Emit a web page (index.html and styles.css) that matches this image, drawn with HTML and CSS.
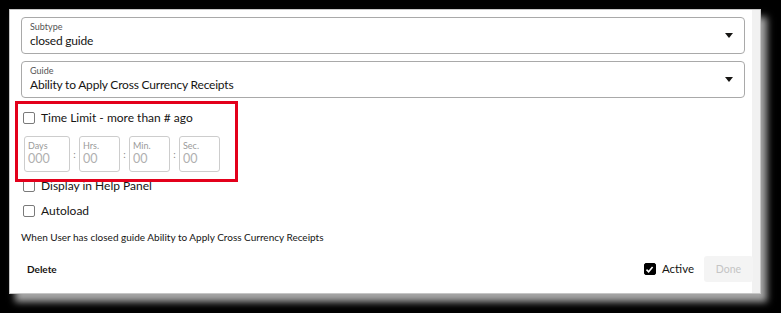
FILE: index.html
```html
<!DOCTYPE HTML>
<html>
<head>
    <meta charset="UTF-8">
    <title>Guide Rule</title>
    <link rel="stylesheet" href="styles.css">
</head>
<body>
    <div class="dialog">
        <div class="select">
            <div class="select-label">Subtype</div>
            <div class="select-value">closed guide</div>
            <span class="caret"></span>
        </div>

        <div class="select second">
            <div class="select-label">Guide</div>
            <div class="select-value">Ability to Apply Cross Currency Receipts</div>
            <span class="caret"></span>
        </div>

        <label class="check-row time-row">
            <span class="box"></span>
            <span>Time Limit - more than # ago</span>
        </label>

        <div class="time-inputs">
            <div class="time-box wide"><span class="time-label">Days</span><span class="time-value">000</span></div>
            <span class="colon">:</span>
            <div class="time-box"><span class="time-label">Hrs.</span><span class="time-value">00</span></div>
            <span class="colon">:</span>
            <div class="time-box"><span class="time-label">Min.</span><span class="time-value">00</span></div>
            <span class="colon">:</span>
            <div class="time-box"><span class="time-label">Sec.</span><span class="time-value">00</span></div>
        </div>

        <label class="check-row help-row">
            <span class="box"></span>
            <span>Display in Help Panel</span>
        </label>

        <label class="check-row autoload-row">
            <span class="box"></span>
            <span>Autoload</span>
        </label>

        <div class="summary">When User has closed guide Ability to Apply Cross Currency Receipts</div>

        <div class="footer">
            <span class="delete">Delete</span>
            <div class="actions">
                <label class="check-row active-row">
                    <span class="box checked">
                        <svg width="9" height="9" viewBox="0 0 9 9"><path d="M1.5 4.6 L3.6 6.7 L7.6 2" fill="none" stroke="#fff" stroke-width="1.6"/></svg>
                    </span>
                    <span>Active</span>
                </label>
                <button class="done">Done</button>
            </div>
        </div>

        <div class="highlight"></div>
    </div>
</body>
</html>
```

FILE: styles.css
```css
html, body {
    height: 100%;
}

body {
    margin: 0;
    background-color: #000;
    font-family: Lato, "Noto Sans", sans-serif;
    color: #161513;
}

.dialog {
    position: relative;
    box-sizing: border-box;
    margin: 9px 0 0 9px;
    width: 752px;
    height: 285px;
    padding: 7px 15px 0 11px;
    background-color: #fff;
    border: 1px solid #c6c6c6;
    box-shadow: inset -8px 0 0 #f1f1f1, 6px 8px 7px #a5a5a5;
    display: flex;
    flex-direction: column;
}

.select {
    position: relative;
    box-sizing: border-box;
    height: 37px;
    border: 1px solid #a9a9a9;
    border-radius: 4px;
    padding: 3px 9px 0 8px;
}

.select.second {
    margin-top: 7px;
}

.select-label {
    font-size: 9px;
    line-height: 11px;
    color: #555;
}

.select-value {
    font-size: 12px;
    line-height: 17px;
    letter-spacing: -0.2px;
}

.caret {
    position: absolute;
    right: 11px;
    top: 15px;
    width: 0;
    height: 0;
    border-left: 4px solid transparent;
    border-right: 4px solid transparent;
    border-top: 5px solid #161513;
}

.check-row {
    display: flex;
    align-items: center;
    gap: 6px;
    font-size: 12px;
    line-height: 18px;
    padding-left: 2px;
}

.box {
    box-sizing: border-box;
    width: 12px;
    height: 12px;
    border: 1px solid #7a7a7a;
    border-radius: 2px;
    flex: none;
}

.box.checked {
    background-color: #000;
    border-color: #000;
    display: flex;
    align-items: center;
    justify-content: center;
}

.time-row {
    margin-top: 11px;
}

.time-inputs {
    display: flex;
    align-items: center;
    margin-top: 9px;
    padding-left: 3px;
}

.time-box {
    box-sizing: border-box;
    width: 41px;
    height: 36px;
    border: 1px solid #cdcdcd;
    border-radius: 3px;
    padding: 3px 3px 0 3px;
    display: flex;
    flex-direction: column;
}

.time-box.wide {
    width: 46px;
}

.time-label {
    font-size: 9px;
    line-height: 11px;
    color: #9a9a9a;
}

.time-value {
    font-size: 12.5px;
    line-height: 16px;
    color: #b0b0b0;
}

.colon {
    width: 9px;
    text-align: center;
    font-size: 10px;
    color: #888;
}

.help-row {
    margin-top: 5px;
}

.autoload-row {
    margin-top: 7px;
}

.summary {
    margin-top: 10px;
    font-size: 10px;
    line-height: 14px;
}

.footer {
    display: flex;
    justify-content: space-between;
    align-items: center;
    margin-top: 12px;
}

.delete {
    font-size: 10px;
    font-weight: bold;
    padding-left: 6px;
}

.actions {
    display: flex;
    align-items: center;
    gap: 10px;
}

.active-row {
    font-size: 11.5px;
    gap: 6px;
}

.done {
    width: 49px;
    height: 26px;
    border: none;
    border-radius: 3px;
    background-color: #f4f4f4;
    color: #c4c4c4;
    font-family: Lato, "Noto Sans", sans-serif;
    font-size: 10.5px;
    margin-right: -8px;
}

.highlight {
    position: absolute;
    left: 5px;
    top: 91px;
    width: 223px;
    height: 81px;
    box-sizing: border-box;
    border: 3px solid #e3001b;
}
```
